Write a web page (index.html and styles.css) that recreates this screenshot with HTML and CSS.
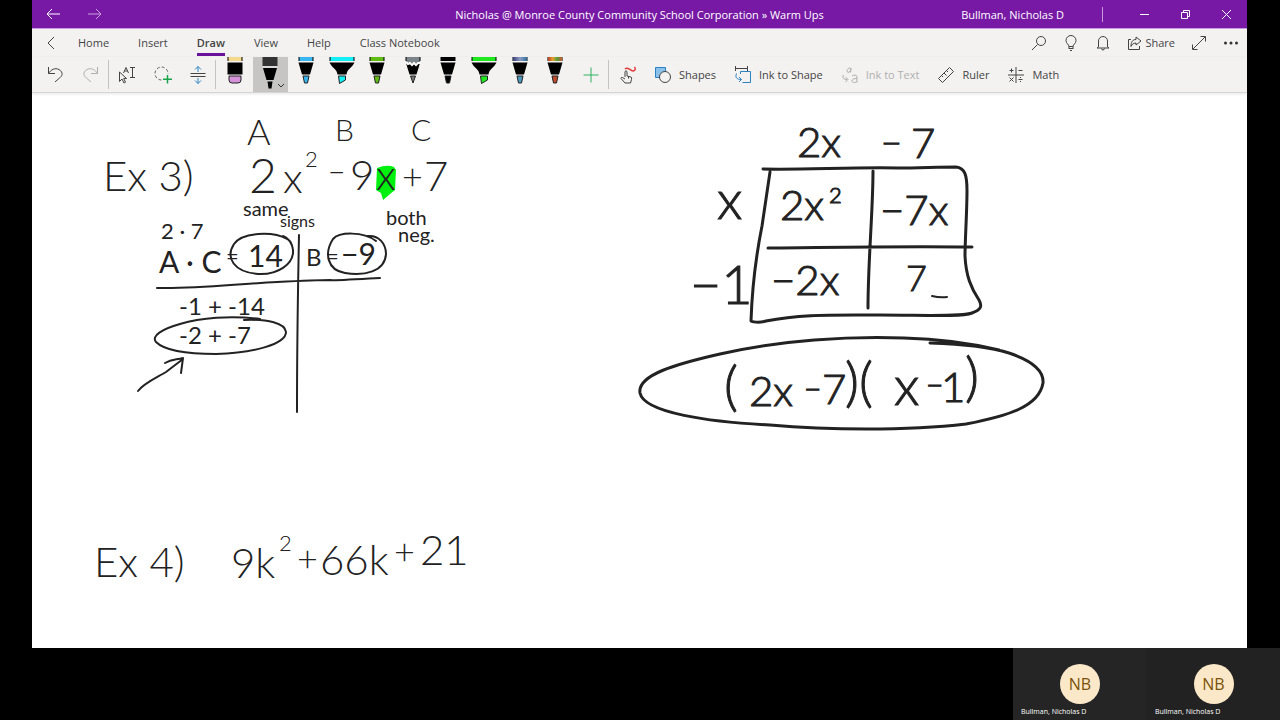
FILE: index.html
```html
<!DOCTYPE html>
<html lang="en">
<head>
    <meta charset="UTF-8">
    <meta name="viewport" content="width=device-width, initial-scale=1.0">
    <title>Warm Ups</title>
    <link rel="stylesheet" href="styles.css">
</head>
<body>
    <!-- Shared pen shapes, coloured through currentColor -->
    <svg class="defs" width="0" height="0" aria-hidden="true">
        <defs>
            <linearGradient id="galaxy"><stop offset="0" stop-color="#3b3f78"/><stop offset=".5" stop-color="#8d9cc4"/><stop offset="1" stop-color="#2c6f9c"/></linearGradient>
            <linearGradient id="rainbow"><stop offset="0" stop-color="#b3402a"/><stop offset=".35" stop-color="#e8a02c"/><stop offset=".65" stop-color="#4da03c"/><stop offset="1" stop-color="#d0582a"/></linearGradient>
            <symbol id="pen" viewBox="0 0 26 36">
                <path fill="currentColor" d="M6 0h14v4H6z"/>
                <path d="M5.5 0h1v4h-1zM19.500 0h1v4h-1z"/>
                <path d="M5.500 5.500h15L17 17.500H9z"/>
                <path fill="currentColor" stroke="#222" d="M10 19h6l-1.500 7h-3z"/>
            </symbol>
            <symbol id="marker" viewBox="0 0 26 36">
                <path fill="currentColor" d="M1 0h24v4H1z"/>
                <path d="M.5 0h1v4h-1zM24.500 0h1v4h-1z"/>
                <path d="M.5 5.500h25C23 11 18 12 17.500 17.500h-9C8 12 3 11 .5 5.500z"/>
                <path fill="currentColor" stroke="#222" d="M9.500 19h7v4l-6 3.500z"/>
            </symbol>
        </defs>
    </svg>

    <main class="app">
        <header class="titlebar">
            <div class="nav">
                <button aria-label="Back"><svg width="14" height="12" viewBox="0 0 14 12"><path d="M14 6H1M6 1L1 6l5 5"/></svg></button>
                <button class="dim" aria-label="Forward"><svg width="14" height="12" viewBox="0 0 14 12"><path d="M0 6h13M8 1l5 5-5 5"/></svg></button>
            </div>
            <div class="title">Nicholas @ Monroe County Community School Corporation » Warm Ups</div>
            <div class="window">
                <span class="user">Bullman, Nicholas D</span>
                <button aria-label="Minimize"><svg width="11" height="11" viewBox="0 0 11 11"><path d="M1 5.500h9"/></svg></button>
                <button aria-label="Restore"><svg width="11" height="11" viewBox="0 0 11 11"><path d="M1.500 3.500h6v6h-6zM3.500 3V1.500h6v6H8"/></svg></button>
                <button aria-label="Close"><svg width="11" height="11" viewBox="0 0 11 11"><path d="M1 1l9 9M10 1l-9 9"/></svg></button>
            </div>
        </header>

        <nav class="menu">
            <button class="back" aria-label="Back"><svg width="10" height="14" viewBox="0 0 10 14"><path d="M8 1L2 7l6 6"/></svg></button>
            <div class="tabs">
                <button>Home</button>
                <button>Insert</button>
                <button class="active">Draw</button>
                <button>View</button>
                <button>Help</button>
                <button>Class Notebook</button>
            </div>
            <div class="actions">
                <button aria-label="Search"><svg width="16" height="16" viewBox="0 0 16 16"><circle cx="10" cy="6" r="4.500"/><path d="M6.500 9.500L1 15"/></svg></button>
                <button aria-label="Tell me"><svg width="16" height="16" viewBox="0 0 16 16"><path d="M6 11.500c0-2-3-3-3-6a5 5 0 0 1 10 0c0 3-3 4-3 6zM6 13.500h4M7 15.500h2M6 11v3M10 11v3"/></svg></button>
                <button aria-label="Notifications"><svg width="16" height="16" viewBox="0 0 16 16"><path d="M3.500 12V6a4.500 4.500 0 0 1 9 0v6l1.500 1H2zM6.500 13.500c0 2 3 2 3 0"/></svg></button>
                <button class="share"><svg width="16" height="16" viewBox="0 0 16 16"><path d="M4 4.500H1.500v10h11V11M9 2l5 4-5 4V8C6 8 5 9.500 4 11.500 4 7 5.500 4.500 9 4.500z"/></svg>Share</button>
                <button aria-label="Full screen"><svg width="16" height="16" viewBox="0 0 16 16"><path d="M2 14L14 2M9.500 1.500h5v5M1.500 9.500v5h5"/></svg></button>
                <button aria-label="More"><svg width="16" height="16" viewBox="0 0 16 16"><g fill="#333" stroke="none"><circle cx="2.500" cy="8" r="1.500"/><circle cx="8" cy="8" r="1.500"/><circle cx="13.500" cy="8" r="1.500"/></g></svg></button>
            </div>
        </nav>

        <div class="toolbar">
            <button class="tool" aria-label="Undo"><svg width="18" height="18" viewBox="0 0 18 18"><path d="M1.500 1v6.500H8M1.500 7.500C4 3.500 8 1.500 12 3.500c5 3 3 7 .5 8.500L8 16"/></svg></button>
            <button class="tool off" aria-label="Redo"><svg width="18" height="18" viewBox="0 0 18 18"><path d="M15.500 1v6.500H9M15.500 7.500C13 3.500 9 1.500 5 3.500 0 6.500 2 10.500 4.500 12L9 16"/></svg></button>
            <div class="sep"></div>
            <button class="tool" aria-label="Select objects or type text"><svg width="18" height="18" viewBox="0 0 18 18"><path d="M.5 6v9.500L3 13l2 4 1.500-.8L4.700 12.500H7.500zM11 1.500h5M11 11.500h5M13.500 1.500v10M4.500 7L7 1.500 9.500 7M5.500 5h3"/></svg></button>
            <button class="tool" aria-label="Lasso select"><svg width="18" height="18" viewBox="0 0 18 18"><circle cx="7.500" cy="7.500" r="6.500" stroke-dasharray="3 2" stroke="#666"/><path fill="#f3f2f1" stroke="none" d="M8 8h10v10H8z"/><path stroke="#16a34a" stroke-width="1.500" d="M13.500 9v8.500M9 13.200h9"/></svg></button>
            <button class="tool" aria-label="Insert space"><svg width="18" height="18" viewBox="0 0 18 18"><path d="M1.500 7.500h15M1.500 10.500h15"/><path stroke="#2b83c4" d="M9 6V.5M6 3.500l3-3 3 3M9 12v5.500M6 14.500l3 3 3-3"/></svg></button>
            <div class="sep"></div>
            <div class="pens">
                <button aria-label="Eraser"><svg width="26" height="36" viewBox="0 0 26 36"><path fill="#f3d98b" d="M6 0h14v4H6z"/><path d="M5.500 0h1v4h-1zM19.500 0h1v4h-1zM5.500 5.500h15v12h-15z"/><path fill="#d493d8" stroke="#222" d="M7 19h12v4q0 3-3 3h-6q-3 0-3-3z"/></svg></button>
                <button class="selected" aria-label="Black pen"><svg width="26" height="36" viewBox="0 0 26 36"><path fill="#333" d="M5.500 0h15v9h-15z"/><path fill="#eee" d="M5.500 9.500h15v1h-15z"/><path d="M6 11h14l-3.500 12h-7z"/><path d="M10.500 24.500h5l-1 7h-3z"/></svg><svg class="caret" width="8" height="6" viewBox="0 0 8 6"><path d="M1 1l3 3 3-3"/></svg></button>
                <button class="blue" aria-label="Blue pen"><svg width="26" height="36"><use href="#pen"/></svg></button>
                <button class="cyan" aria-label="Cyan highlighter"><svg width="26" height="36"><use href="#marker"/></svg></button>
                <button class="olive" aria-label="Green pen"><svg width="26" height="36"><use href="#pen"/></svg></button>
                <button aria-label="Pencil"><svg width="26" height="36" viewBox="0 0 26 36"><path fill="#7b8488" d="M6 0h14v6H6z"/><path d="M5.500 0h1v4h-1zM19.500 0h1v4h-1z"/><path d="M6 6h14l-3.500 11.500h-7z"/><path fill="none" stroke="#fff" stroke-width="2" d="M6 5l2 2 2-1 2 2 2-2 2 2 2-2 2 0"/><path fill="#777" stroke="#222" d="M10.500 19h5L13 26z"/></svg></button>
                <button class="black" aria-label="Black fine pen"><svg width="26" height="36"><use href="#pen"/></svg></button>
                <button class="green" aria-label="Green highlighter"><svg width="26" height="36"><use href="#marker"/></svg></button>
                <button class="steel" aria-label="Galaxy pen"><svg width="26" height="36"><use href="#pen"/><path fill="url(#galaxy)" d="M6 0h14v4H6z"/></svg></button>
                <button class="rust" aria-label="Rainbow pen"><svg width="26" height="36"><use href="#pen"/><path fill="url(#rainbow)" d="M6 0h14v4H6z"/></svg></button>
            </div>
            <button class="tool" aria-label="Add pen"><svg width="18" height="18" viewBox="0 0 18 18"><path stroke="#2eb060" d="M9 1.500v15M1.500 9h15"/></svg></button>
            <div class="sep"></div>
            <button class="tool" aria-label="Draw with touch"><svg width="18" height="18" viewBox="0 0 18 18"><path d="M6 11V5.500q1-1.500 2 0V10l4 1q1 .5.500 2.500L11.500 17H6L2 12.500q0-1.500 1.500-1L6 13M9.500 10.500v2"/><path stroke="#e23b3b" stroke-width="1.500" d="M6 3c3-3 5 2 8 2 2 0 3-2 1.500-4"/></svg></button>
            <button class="labelled"><svg width="18" height="18" viewBox="0 0 18 18"><path fill="#8cc1ec" stroke="#2b83c4" d="M1.500 1.500h10v10h-10z"/><circle cx="11" cy="11" r="5.500" fill="#f3f2f1"/></svg>Shapes</button>
            <button class="labelled"><svg width="18" height="18" viewBox="0 0 18 18"><path d="M1.500 0v5M13.500 0v5M1.500 2.500h12"/><path stroke="#2b83c4" d="M6.500 8V5.500h10v11h-8M2.500 7.500c-1.500 4 0 6 5 6M5 11l2.500 2.500L5 16"/></svg>Ink to Shape</button>
            <button class="labelled off"><svg width="18" height="18" viewBox="0 0 18 18"><path d="M2.500 9c-1.500 3 0 4.500 4 4.500M4.500 11l2.500 2.500L4.500 16"/><path d="M10 2.500c-3-2-5 3-3 4 2 0 3-3 3-4l-.5 4M11 10c2-1.500 5-1 5 1v5.500M16 12.500c-3 0-5 .5-5 2.500s4 2 5 0"/></svg>Ink to Text</button>
            <button class="labelled"><svg width="18" height="18" viewBox="0 0 18 18"><path d="M1.500 12.500l11-11 4 4-11 11zM4.500 9.500l1.500 1.500M7 7l2.500 2.500M9.500 4.500L11 6"/></svg>Ruler</button>
            <button class="labelled"><svg width="18" height="18" viewBox="0 0 18 18"><path d="M9 1v16M1 9h16M2.500 4.500h4M4.500 2.500v4M11.500 4.500h4M2.500 11.500l4 4M6.500 11.500l-4 4M11.500 13.500h4M13.500 11v1M13.500 15v1"/></svg>Math</button>
        </div>

        <section class="page">
            <svg class="ink">
                <!-- user units are window pixels; the page starts below the toolbar -->
                <g transform="translate(-32 -93)">
                    <path class="highlight" d="M377 168q10-4 17-1l2 3-1 20-5 4-7 6-2-7-5-3z"/>

                    <g class="fine">
                        <text class="s42" x="103" y="191">Ex 3)</text>
                        <text class="s36" x="247" y="145">A</text>
                        <text class="s30" x="335" y="141">B</text>
                        <text class="s30" x="411" y="141">C</text>
                        <text class="s48" x="249" y="193">2</text>
                        <text class="s42" x="283" y="193">x</text>
                        <text class="s22" x="305" y="167">2</text>
                        <text class="s30" x="328" y="183">−</text>
                        <text class="s42" x="350" y="190">9</text>
                        <text class="s42" x="376" y="190">x</text>
                        <text class="s36" x="402" y="190">+</text>
                        <text class="s42" x="424" y="191">7</text>
                        <text class="s42" x="94" y="577">Ex 4)</text>
                        <text class="s42" x="231" y="578">9k</text>
                        <text class="s22" x="279" y="551">2</text>
                        <text class="s36" x="297" y="572">+</text>
                        <text class="s42" x="320" y="575">66k</text>
                        <text class="s36" x="394" y="565">+</text>
                        <text class="s42" x="420" y="565">21</text>
                    </g>

                    <g class="medium">
                        <text class="s20" x="243" y="216">same</text>
                        <text class="s16" x="280" y="227">signs</text>
                        <text class="s20" x="386" y="225">both</text>
                        <text class="s20" x="398" y="242">neg.</text>
                        <text class="s22" x="161" y="239">2 · 7</text>
                        <text class="s30" x="159" y="273">A · C</text>
                        <text class="s22" x="226" y="264">=</text>
                        <text class="s30" x="248" y="267">14</text>
                        <text class="s24" x="306" y="266">B</text>
                        <text class="s22" x="326" y="264">=</text>
                        <text class="s30" x="341" y="265">−9</text>
                        <text class="s24" x="179" y="315">-1 + -14</text>
                        <text class="s24" x="179" y="344">-2 + -7</text>
                    </g>

                    <g class="bold">
                        <text class="s42" x="797" y="157">2x</text>
                        <text class="s36" x="881" y="156">−</text>
                        <text class="s42" x="911" y="158">7</text>
                        <text class="s54" x="717" y="219">x</text>
                        <text class="s42" x="780" y="220">2x</text>
                        <text class="s22" x="829" y="203">2</text>
                        <text class="s42" x="880" y="225">−7x</text>
                        <text class="s54" x="690" y="304">−1</text>
                        <text class="s42" x="771" y="295">−2x</text>
                        <text class="s36" x="906" y="291">7</text>
                        <text class="s54" x="724" y="405">(</text>
                        <text class="s42" x="749" y="406">2x</text>
                        <text class="s30" x="804" y="400">−</text>
                        <text class="s42" x="822" y="404">7</text>
                        <text class="s54" x="845" y="401">)(</text>
                        <text class="s54" x="894" y="405">x</text>
                        <text class="s30" x="926" y="396">−</text>
                        <text class="s42" x="941" y="402">1</text>
                        <text class="s54" x="965" y="396">)</text>
                    </g>

                    <g class="stroke">
                        <path d="M287 239c-14-8-45-7-53 5-9 14 0 28 24 30 20 1 36-10 35-24-1-8-5-12-10-14"/>
                        <path d="M376 241c-13-10-37-9-43-2-9 14-6 31 12 34 19 3 40-1 41-19 0-10-7-19-18-18"/>
                        <path d="M299 235c-1 50-2 110-2 177M157 288c40 1 78-4 120-6 20-1 42-2 53-2 10 1 25-1 50-2"/>
                        <path d="M260 319c-30-4-60-1-80 5-18 5-29 12-24 18 10 10 36 12 60 12 38-1 70-10 70-22-1-9-18-13-42-12"/>
                        <path d="M138 391c6-8 20-14 28-19l17-13M165 363c7-4 11-3 18-5l-2 15"/>
                        <path d="M932 296q8 2 15 1"/>
                    </g>
                    <g class="stroke wide">
                        <path d="M763 169c40 1 90-2 135-1 20 0 40-1 58-1 9 1 11 8 11 24 0 20-2 50-2 65 1 20 6 32 14 44 4 7 1 10-7 13-10 4-50 2-92 2-50 0-80-1-114 6-6 2-15 1-15 0 1-30 4-60 11-95l8-54"/>
                        <path d="M873 171c0 40-5 90-5 137M768 248c40 0 110-2 204-1"/>
                        <path d="M930 343c30 1 60 4 79 10 24 8 35 18 34 30-4 24-36 33-77 41-60 7-140 6-196 1-60-3-126-12-130-32-3-18 36-29 80-39 60-14 130-18 184-16 40 1 70 6 95 12"/>
                    </g>
                </g>
            </svg>
        </section>
    </main>

    <footer class="participants">
        <div class="person">
            <div class="avatar">NB</div>
            <div class="name">Bullman, Nicholas D</div>
        </div>
        <div class="person">
            <div class="avatar">NB</div>
            <div class="name">Bullman, Nicholas D</div>
        </div>
    </footer>
</body>
</html>
```
FILE: styles.css
```css
* { box-sizing: border-box; }
body { margin: 0; min-height: 100vh; display: flex; flex-direction: column; background-color: #000; color: #444; font-family: "Open Sans", "Noto Sans", sans-serif; font-size: 11px; }
button { margin: 0; padding: 0; border: none; background: none; color: inherit; font: inherit; display: flex; align-items: center; justify-content: center; }
svg { display: block; fill: none; stroke: #444; }
.defs { position: absolute; }

.app { flex: 1; display: flex; flex-direction: column; margin: 0 33px 0 32px; background-color: #fff; }

/* Title bar */
.titlebar { display: grid; grid-template-columns: 1fr auto 1fr; align-items: center; height: 29px; background-color: #7719a5; border-bottom: 1px solid #c79add; color: #fff; }
.titlebar svg { stroke: #fff; }
.nav { display: flex; gap: 28px; padding-left: 14px; }
.dim { opacity: 0.6; }
.window { display: flex; justify-content: flex-end; align-items: center; }
.window button { width: 41px; height: 28px; }
.user { padding-right: 38px; margin-right: 21px; border-right: 1px solid #c79add; }

/* Tabs */
.menu { display: flex; align-items: center; height: 28px; padding-bottom: 1px; background-color: #f3f2f1; }
.back { width: 18px; margin-left: 10px; }
.tabs { display: flex; gap: 29px; margin-left: 18px; }
.tabs button { height: 27px; border-bottom: 3px solid transparent; border-top: 2px solid transparent; }
.tabs .active { font-weight: 600; border-bottom-color: #6b129c; }
.actions { display: flex; align-items: center; gap: 16px; margin-left: auto; padding-right: 8px; }
.share { gap: 2px; }

/* Drawing tools */
.toolbar { position: relative; display: flex; align-items: center; height: 36px; padding-left: 6px; background-color: #f3f2f1; border-bottom: 1px solid #d6d5d4; box-shadow: 0 1px 3px rgba(0,0,0,0.1); }
.tool { width: 35px; height: 35px; }
.sep { width: 1px; height: 29px; margin-right: 1px; background-color: #c4c3c2; }
.off { color: #b0afae; }
.off svg { stroke: #b0afae; }
.pens { display: grid; grid-template-columns: repeat(10, 1fr); width: 356px; height: 35px; }
.pens button { position: relative; overflow: hidden; align-items: flex-start; }
.pens svg { fill: #000; stroke: none; flex: none; }
.pens .selected { background-color: #c6c5c4; }
.pens .caret { position: absolute; right: 3px; bottom: 3px; fill: none; stroke: #333; }
.blue { color: #38b6f1; }
.cyan { color: #13f0f5; }
.olive { color: #62bd12; }
.black { color: #000; }
.green { color: #1fe81f; }
.steel { color: #4d9cc0; }
.rust { color: #c04a2c; }
.labelled { gap: 7px; height: 35px; padding: 0 9px; }

/* Notebook page */
.page { flex: 1; display: flex; min-height: 550px; }
.ink { flex: 1; height: auto; }
.ink text { fill: #222; stroke: none; font-family: Lato, "Open Sans", sans-serif; }
.fine text { font-weight: 300; }
.medium text { font-weight: 400; }
.bold text { font-weight: 300; stroke: #222; stroke-width: 1px; }
.s16 { font-size: 16px; }
.s20 { font-size: 20px; }
.s22 { font-size: 22px; }
.s24 { font-size: 24px; }
.s30 { font-size: 30px; }
.s36 { font-size: 36px; }
.s42 { font-size: 42px; }
.s48 { font-size: 48px; }
.s54 { font-size: 54px; }
.stroke { stroke: #222; stroke-width: 2; stroke-linecap: round; stroke-linejoin: round; }
.wide { stroke-width: 3; }
.highlight { fill: #00f010; stroke: none; }

/* Call participants */
.participants { display: flex; justify-content: flex-end; height: 72px; }
.person { width: 134px; padding: 16px 8px 0; background-color: #252525; color: #fff; }
.person + .person { width: 133px; background-color: #222; }
.avatar { display: flex; align-items: center; justify-content: center; width: 40px; height: 40px; margin: 0 auto; border-radius: 50%; background-color: #fbe8c8; color: #7a5208; font-size: 16px; }
.name { margin-top: 3px; font-size: 7px; line-height: 10px; }
```
